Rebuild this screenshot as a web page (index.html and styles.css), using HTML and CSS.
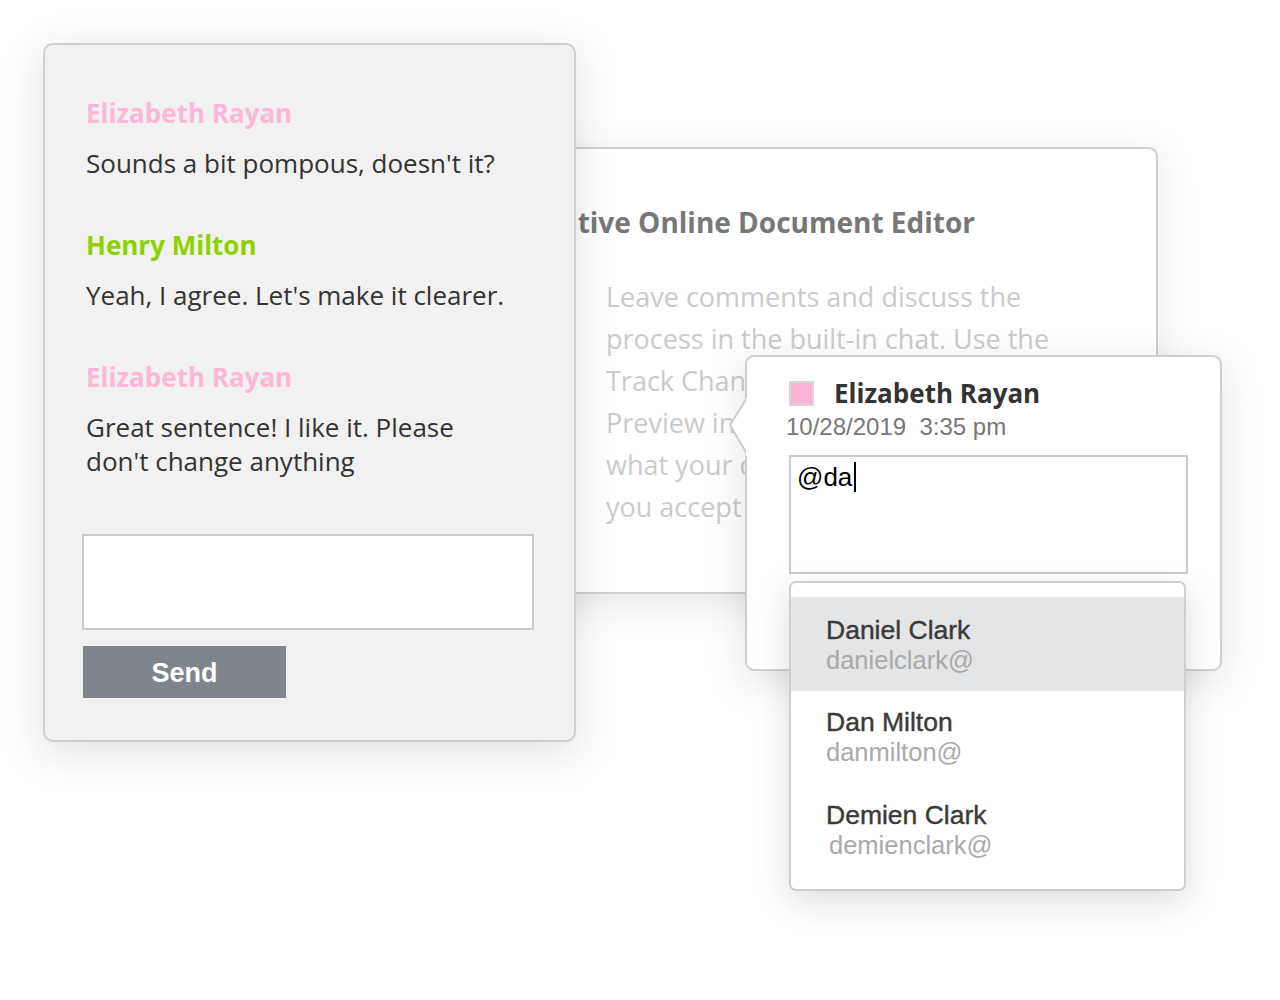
FILE: index.html
```html
<!DOCTYPE html>
<html lang="en">
<head>
<meta charset="utf-8">
<title>Chat and comments</title>
<link rel="stylesheet" href="styles.css">
</head>
<body>
<div class="canvas">
  <section class="doc">
    <div class="doc-head"><h1 class="doc-title">Collaborative Online Document Editor</h1></div>
    <p class="doc-text">Leave comments and discuss the<br>process in the built-in chat. Use the<br>Track Changes<br>Preview in<br>what your co-<br>you accept</p>
  </section>

  <section class="chat">
    <div class="msgs">
      <div class="msg">
        <div class="name pink">Elizabeth Rayan</div>
        <div class="text">Sounds a bit pompous, doesn't it?</div>
      </div>
      <div class="msg">
        <div class="name green">Henry Milton</div>
        <div class="text">Yeah, I agree. Let's make it clearer.</div>
      </div>
      <div class="msg">
        <div class="name pink">Elizabeth Rayan</div>
        <div class="text">Great sentence! I like it. Please don't change anything</div>
      </div>
    </div>
    <div class="chat-input"></div>
    <div class="send">Send</div>
  </section>

  <section class="comment">
    <svg class="arrow" width="20" height="58" viewBox="0 0 20 58"><polygon points="19,0 2,27 19,56" fill="#fff" stroke="#cccccc" stroke-width="2" stroke-linejoin="round"/><rect x="18" y="0" width="3" height="58" fill="#fff"/></svg>
    <div class="c-head">
      <span class="swatch"></span>
      <span class="c-name">Elizabeth Rayan</span>
    </div>
    <div class="c-date">10/28/2019  3:35 pm</div>
    <div class="c-input"><span class="typed">@da</span><span class="caret"></span></div>

    <ul class="mentions">
      <li class="mention active"><div class="m-name">Daniel Clark</div><div class="m-mail">danielclark@</div></li>
      <li class="mention"><div class="m-name">Dan Milton</div><div class="m-mail">danmilton@</div></li>
      <li class="mention"><div class="m-name">Demien Clark</div><div class="m-mail shifted">demienclark@</div></li>
    </ul>
  </section>
</div>
</body>
</html>
```

FILE: styles.css
```css
* { box-sizing: border-box; }
html, body { margin: 0; padding: 0; background: #ffffff; }
body { width: 1280px; height: 1000px; overflow: hidden; font-family: "Open Sans", "DejaVu Sans", sans-serif; }

.canvas { position: relative; width: 1280px; height: 1000px; }

/* document window (back) */
.doc {
  position: absolute; left: 440px; top: 147px; width: 718px; height: 447px;
  background: #fff; border: 2px solid #cfcfcf; border-radius: 9px;
  box-shadow: 0 10px 40px rgba(0,0,0,0.10);
  padding: 53px 0 0 164px;
}
.doc-head { display: flex; justify-content: flex-end; margin-right: 181px; }
.doc-title {
  margin: 0; white-space: nowrap; flex: none;
  font-size: 28px; line-height: 40px; font-weight: 700; color: #777;
}
.doc-text {
  margin: 34px 0 0 0; font-size: 27px; line-height: 42px; color: #cbcbcb; white-space: nowrap;
}

/* chat window */
.chat {
  position: absolute; left: 43px; top: 43px; width: 533px; height: 699px;
  background: #f1f1f1; border: 2px solid #cfcfcf; border-radius: 10px;
  box-shadow: 0 10px 44px rgba(0,0,0,0.13);
  padding: 51px 0 0 41px;
  display: flex; flex-direction: column; align-items: flex-start;
}
.msgs { width: 420px; display: flex; flex-direction: column; gap: 48px; }
.msg { display: flex; flex-direction: column; gap: 16px; }
.name { font-size: 26px; line-height: 34px; font-weight: 700; }
.pink { color: #fdb8d7; }
.green { color: #8ed000; }
.text { font-size: 26px; line-height: 34px; color: #333; }
.chat-input {
  margin: 56px 0 0 -4px; width: 452px; height: 96px;
  background: #fff; border: 2px solid #cccccc;
}
.send {
  margin: 16px 0 0 -3px; width: 203px; height: 52px;
  background: #7e858c; color: #fff;
  font-family: "Liberation Sans", Arial, sans-serif; font-weight: 700; font-size: 27px;
  display: flex; align-items: center; justify-content: center; padding-top: 2px;
}

/* comment popup */
.comment {
  position: absolute; left: 745px; top: 355px; width: 477px; height: 316px;
  background: #fff; border: 2px solid #cfcfcf; border-radius: 9px;
  box-shadow: 0 10px 40px rgba(0,0,0,0.12);
  padding: 19px 0 0 42px;
}
.arrow { position: absolute; left: -19px; top: 41px; }
.c-head { display: flex; align-items: center; gap: 20px; height: 34px; }
.swatch { width: 25px; height: 25px; background: #fcb4d6; border: 2px solid #d6d6d6; }
.c-name { font-size: 26px; line-height: 34px; font-weight: 700; color: #333; }
.c-date {
  margin: 2px 0 0 -3px; white-space: pre;
  font-family: "Liberation Sans", Arial, sans-serif; font-size: 24px; line-height: 30px; color: #777;
}
.c-input {
  margin-top: 13px; width: 399px; height: 119px;
  border: 2px solid #cccccc; padding: 5px 0 0 6px;
  display: flex; align-items: flex-start;
  font-family: "Liberation Sans", Arial, sans-serif; font-size: 26px; line-height: 30px; color: #000;
}
.caret { display: inline-block; width: 2px; height: 30px; background: #000; margin-left: 2px; }

/* mention list */
.mentions {
  position: absolute; left: 42px; top: 224px; width: 397px; height: 310px;
  margin: 0; padding: 14px 0 0 0; list-style: none;
  background: #fff; border: 2px solid #cfcfcf; border-radius: 7px;
  box-shadow: 0 10px 34px rgba(0,0,0,0.14);
  font-family: "Liberation Sans", Arial, sans-serif;
}
.mention { height: 93px; padding: 16px 0 0 35px; }
.mention.active { background: #e4e5e7; height: 94px; padding-top: 18px; }
.m-name { font-size: 26.5px; line-height: 30px; color: #3a3a3a; -webkit-text-stroke: 0.4px #3a3a3a; }
.m-mail { font-size: 25.5px; line-height: 30px; color: #a9a9a9; }
.m-mail.shifted { padding-left: 3px; }
```
